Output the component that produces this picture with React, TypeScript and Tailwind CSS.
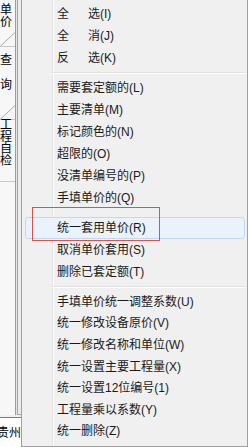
import React from 'react';

const cjk = { fontFamily: '"Liberation Sans", "Noto Sans CJK SC", sans-serif' };

const grupo1 = [
    { a: '全', b: '选(I)' },
    { a: '全', b: '消(J)' },
    { a: '反', b: '选(K)' },
];

const grupo2 = ['需要套定额的(L)', '主要清单(M)', '标记颜色的(N)', '超限的(O)', '没清单编号的(P)', '手填单价的(Q)'];

const grupo3 = ['取消单价套用(S)', '删除已套定额(T)'];

const grupo4 = [
    '手填单价统一调整系数(U)',
    '统一修改设备原价(V)',
    '统一修改名称和单位(W)',
    '统一设置主要工程量(X)',
    '统一设置12位编号(1)',
    '工程量乘以系数(Y)',
    '统一删除(Z)',
];

function Diagonal() {
    return (
        <svg width="15" height="15" viewBox="0 0 15 15" className="block">
            <line x1="0" y1="14.5" x2="15" y2="0.5" stroke="#a8a8a8" strokeWidth="1" />
            <line x1="0" y1="14.5" x2="15" y2="14.5" stroke="#c8c8c8" strokeWidth="1" />
        </svg>
    );
}

function Separador() {
    return (
        <div className="h-[8px] flex flex-col justify-center ml-[30px] mr-[2px]">
            <div className="h-px bg-[#e0e0e0]" />
            <div className="h-px bg-white" />
        </div>
    );
}

function Item({ texto, h = 'h-[22px]' }: { texto: React.ReactNode; h?: string }) {
    return (
        <div className={`${h} flex items-center pl-[35px] text-[12px] leading-none text-[#1a1a1a] whitespace-nowrap`}>
            {texto}
        </div>
    );
}

export default function App() {
    return (
        <div className="relative w-[248px] h-[447px] flex overflow-hidden bg-[#f0f0f0]" style={cjk}>
            {/* faixa das abas à esquerda */}
            <div className="w-[21px] flex flex-col">
                <div className="flex-1 flex">
                    <div className="w-[15px] bg-[#f7f7f7] flex flex-col text-[12px] leading-[12px] text-black overflow-hidden">
                        <span className="block h-[12px] mt-[4px]">单</span>
                        <span className="block h-[12px]">价</span>
                        <div className="mt-[4px]">
                            <Diagonal />
                        </div>
                        <span className="block h-[12px] mt-[7px]">查</span>
                        <span className="block h-[12px] mt-[13px]">询</span>
                        <div className="mt-[14px]">
                            <Diagonal />
                        </div>
                        <span className="block h-[12px] -mt-[1px]">工</span>
                        <span className="block h-[12px]">程</span>
                        <span className="block h-[12px]">自</span>
                        <span className="block h-[12px]">检</span>
                        <div className="mt-[14px] h-px bg-[#c8c8c8]" />
                    </div>
                    <div className="w-px bg-[#9c9c9c]" />
                    <div className="w-px bg-[#e4e4e4]" />
                    <div className="w-px bg-[#a4a4a4]" />
                    <div className="w-[3px] bg-[#ececec] border-b border-[#a4a4a4]" />
                </div>
                <div className="h-[30px] mt-[2px] border-t border-[#808080] bg-white flex items-center overflow-hidden">
                    <span className="text-[12px] leading-none text-black whitespace-nowrap -ml-[3px]">贵州</span>
                </div>
            </div>

            {/* menu de contexto */}
            <div className="relative flex-1 bg-[#f0f0f0] border-l border-r border-b border-[#a0a0a0] pt-[3px]">
                <div className="absolute top-0 bottom-0 left-[30px] w-px bg-[#e2e3e3]" />
                <div className="absolute top-0 bottom-0 left-[31px] w-px bg-white" />

                <div className="relative">
                    {grupo1.map((g, i) => (
                        <Item
                            key={i}
                            texto={
                                <>
                                    <span className="inline-block w-[31px]">{g.a}</span>
                                    <span>{g.b}</span>
                                </>
                            }
                        />
                    ))}
                    <Separador />
                    {grupo2.map(t => (
                        <Item key={t} texto={t} />
                    ))}

                    <div className="relative z-10 mt-[8px] ml-[3px] mr-[2px] h-[22px] flex items-center pl-[31px] border border-[#c3d8f0] rounded-[3px] bg-[#eaf2fb] text-[12px] leading-none text-[#1a1a1a] whitespace-nowrap">
                        统一套用单价(R)
                    </div>

                    {grupo3.map(t => (
                        <Item key={t} texto={t} />
                    ))}
                    <Separador />
                    {grupo4.map(t => (
                        <Item key={t} texto={t} h="h-[21.6px]" />
                    ))}
                </div>
            </div>

            {/* marcação vermelha */}
            <div className="absolute left-[32px] top-[207px] w-[128px] h-[34px] border border-[#d9534f] z-20" />
        </div>
    );
}
